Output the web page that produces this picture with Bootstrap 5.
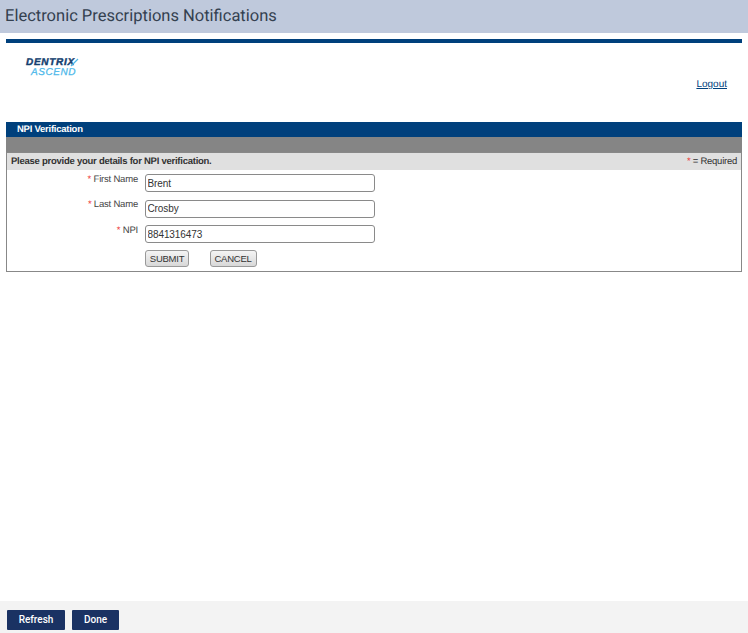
<!DOCTYPE html>
<html lang="en">
<head>
<meta charset="utf-8">
<title>Electronic Prescriptions Notifications</title>
<link href="https://cdn.jsdelivr.net/npm/bootstrap@5.3.0/dist/css/bootstrap.min.css" rel="stylesheet">
<style>
html,body{height:100%;margin:0;background:#fff;overflow:hidden}
body{font-family:"Liberation Sans",Arial,sans-serif;font-size:10px;color:#333;text-rendering:geometricPrecision}
.shell{height:633px}
.apptitle{height:33px;background:#bfc9dc;color:#33404f;font-family:Roboto,sans-serif;font-size:16.5px;line-height:33px;padding-left:5px;margin-bottom:6px}
.work{padding:0 6px;flex:1 1 auto;min-height:0}
.topbar{height:4px;background:#00407c}
.brandrow{height:78.5px}
.logobox{padding:15px 0 0 20px;font-style:italic;font-weight:700;width:90px;position:relative}
.logo1{color:#14406f;font-size:10px;letter-spacing:.7px;line-height:9.5px;display:block;-webkit-text-stroke:.4px #14406f}
.logo2{color:#4cb8ea;font-size:10px;letter-spacing:.55px;font-weight:400;line-height:9.5px;display:block;padding-left:5px;-webkit-text-stroke:.25px #4cb8ea}
.swoosh{position:absolute;left:64px;top:15px;width:9px;height:10px}
.logoutlink{color:#00407c;font-size:10px;margin:36px 15px 0 0;line-height:12px}
.panelhead{background:#00407c;color:#fff;font-weight:700;font-size:9.5px;letter-spacing:-.25px;height:15px;line-height:15px;padding-left:11px}
.panelsub{height:15px;background:#858585}
.panelbox{border:1px solid #888;height:120.5px}
.panelinfo{height:17.5px;background:#e0e0e0;line-height:18px;padding:0 4px;font-size:9.5px;letter-spacing:-.25px;color:#333;margin-bottom:4px}
.req{color:#e33}
.rowline{height:25.5px;margin:0}
.lab{width:131px;text-align:right;font-size:9.5px;letter-spacing:-.2px;color:#444;line-height:12px;margin-top:-.5px;flex:none}
.fld{margin-left:7px;width:229.5px;height:18px;border:1px solid #8a8a8a;border-radius:3px;padding:0 1.5px;font:10px "Liberation Sans",Arial,sans-serif;letter-spacing:-.1px;color:#333;background:#fff;outline:0}
.btnrow{padding-left:138px;gap:20.5px;margin-top:-1px}
.formbtn{height:17px;padding:0;font-size:9.5px;letter-spacing:-.25px;line-height:15px;color:#333;background:linear-gradient(#f4f4f4,#d8d8d8);border:1px solid #999;border-radius:3px}
.btn1{width:44px}.btn2{width:47px}
.foot{height:32px;background:#f3f3f3;padding:9px 7px 0;gap:7px;flex:none}
.footbtn{height:20px;background:#1a3263;color:#fff;border:0;font-weight:500;font-size:10px;line-height:20px;padding:0;border-radius:1px;font-family:Roboto,"Liberation Sans",sans-serif}
.fb1{width:58px}.fb2{width:47px}
</style>
</head>
<body>
<div class="shell d-flex flex-column">
  <div class="apptitle">Electronic Prescriptions Notifications</div>
  <div class="work">
    <div class="topbar"></div>
    <div class="brandrow d-flex justify-content-between">
      <div class="logobox">
        <span class="logo1">DENTRIX</span>
        <span class="logo2">ASCEND</span>
        <svg class="swoosh" viewBox="0 0 9 10" aria-hidden="true"><path d="M1 8 L8 1" stroke="#4cb8ea" stroke-width="1.2" fill="none"/></svg>
      </div>
      <a href="#" class="logoutlink">Logout</a>
    </div>
    <div class="panelhead">NPI Verification</div>
    <div class="panelsub"></div>
    <div class="panelbox">
      <div class="panelinfo d-flex justify-content-between">
        <b>Please provide your details for NPI verification.</b>
        <span><span class="req">*</span> = Required</span>
      </div>
      <div class="rowline d-flex"><label class="lab"><span class="req">*</span> First Name</label><input class="fld" value="Brent"></div>
      <div class="rowline d-flex"><label class="lab"><span class="req">*</span> Last Name</label><input class="fld" value="Crosby"></div>
      <div class="rowline d-flex"><label class="lab"><span class="req">*</span> NPI</label><input class="fld" value="8841316473"></div>
      <div class="btnrow d-flex">
        <button type="button" class="formbtn btn1">SUBMIT</button>
        <button type="button" class="formbtn btn2">CANCEL</button>
      </div>
    </div>
  </div>
  <div class="foot d-flex">
    <button type="button" class="footbtn fb1">Refresh</button>
    <button type="button" class="footbtn fb2">Done</button>
  </div>
</div>
<script src="https://cdn.jsdelivr.net/npm/bootstrap@5.3.0/dist/js/bootstrap.bundle.min.js"></script>
</body>
</html>
